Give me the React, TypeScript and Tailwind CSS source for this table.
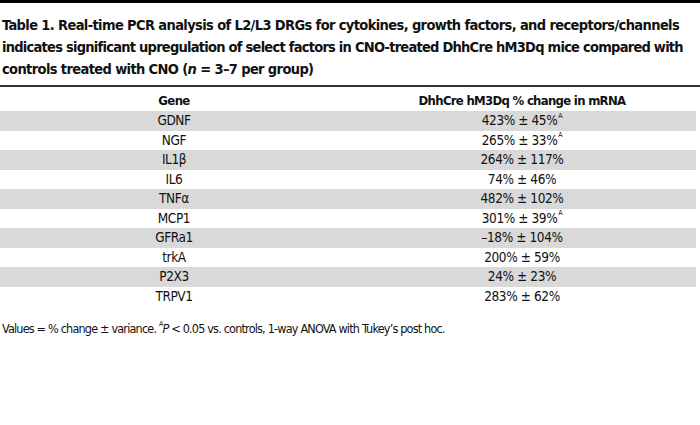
const rows: [string, string, boolean][] = [
  ["GDNF", "423% ± 45%", true],
  ["NGF", "265% ± 33%", true],
  ["IL1β", "264% ± 117%", false],
  ["IL6", "74% ± 46%", false],
  ["TNFα", "482% ± 102%", false],
  ["MCP1", "301% ± 39%", true],
  ["GFRa1", "–18% ± 104%", false],
  ["trkA", "200% ± 59%", false],
  ["P2X3", "24% ± 23%", false],
  ["TRPV1", "283% ± 62%", false],
];

const font = "font-['DejaVu_Sans_Condensed','Liberation_Sans_Narrow',Roboto,sans-serif]";

export default function App() {
  return (
    <div className={`w-[700px] h-[425px] bg-white text-[#111] ${font}`}>
      <div className="h-[3px] bg-black" />
      <h1 className="mt-[11px] px-[2px] text-[14.5px] leading-[22px] font-bold tracking-[-0.62px] whitespace-nowrap">
        Table 1. Real-time PCR analysis of L2/L3 DRGs for cytokines, growth factors, and receptors/channels
        <br />
        <span className="tracking-[-0.75px]">
          indicates significant upregulation of select factors in CNO-treated DhhCre hM3Dq mice compared with
        </span>
        <br />
        controls treated with CNO (<i>n</i> = 3–7 per group)
      </h1>
      <div className="mt-[5px] h-[2px] bg-[#333]" />
      <table className="w-[696px] border-collapse text-[13.5px] tracking-[-0.4px]">
        <thead>
          <tr className="h-[24px]">
            <th className="w-1/2 text-center font-bold pt-[3px] text-[13px] tracking-[-0.6px]">Gene</th>
            <th className="w-1/2 text-center font-bold pt-[3px] text-[13px] tracking-[-0.7px]">
              DhhCre hM3Dq % change in mRNA
            </th>
          </tr>
        </thead>
        <tbody>
          {rows.map(([gene, val, sig], i) => (
            <tr key={gene} className={`h-[19.5px] ${i % 2 === 0 ? "bg-[#d9d9d9]" : ""}`}>
              <td className="text-center leading-[19px]">{gene}</td>
              <td className="text-center leading-[19px]">
                {val}
                {sig && <sup className="text-[7px] align-[4px] ml-[1px]">A</sup>}
              </td>
            </tr>
          ))}
        </tbody>
      </table>
      <p className="mt-[14px] px-[2px] text-[12.5px] leading-[18px] tracking-[-0.8px] whitespace-nowrap">
        Values = % change ± variance. <sup className="text-[7px] align-[4px]">A</sup>
        <i>P</i> &lt; 0.05 vs. controls, 1-way ANOVA with Tukey’s post hoc.
      </p>
    </div>
  );
}
